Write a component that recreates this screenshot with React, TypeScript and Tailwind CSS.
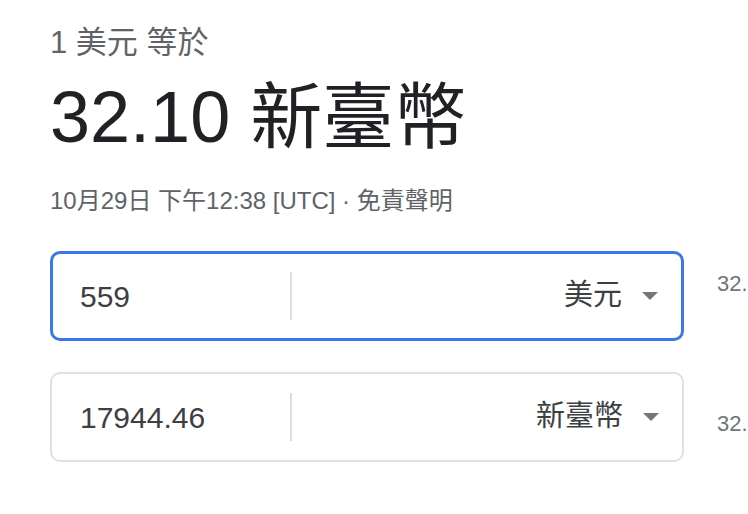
const font = { fontFamily: '"Liberation Sans", "Noto Sans CJK TC", Arial, sans-serif' };

function Arrow() {
    return (
        <svg width="16" height="8" viewBox="0 0 16 8" className="shrink-0">
            <path d="M0 0 L16 0 L8 8 Z" fill="#757575" />
        </svg>
    );
}

function ConverterRow({ value, unit, active }: { value: string; unit: string; active?: boolean }) {
    return (
        <div
            className={
                active
                    ? 'flex h-[90px] w-[634px] shrink-0 items-center rounded-[10px] border-[3px] border-[#3b78e7]'
                    : 'flex h-[90px] w-[634px] shrink-0 items-center rounded-[10px] border-2 border-[#dfe1e5]'
            }
        >
            <div className={active ? 'w-[237px] pl-[27px] text-[30px] text-[#3c4043]' : 'w-[238px] pl-[28px] text-[30px] text-[#3c4043]'}>
                {value}
            </div>
            <div className="h-[48px] w-[2px] bg-[#dadce0]" />
            <div className="flex flex-1 items-center justify-end gap-[20px] pr-[23px]">
                <span className="text-[29px] text-[#3c4043]">{unit}</span>
                <Arrow />
            </div>
        </div>
    );
}

export default function App() {
    return (
        <div className="h-[514px] w-[748px] overflow-hidden bg-white" style={font}>
            <div className="pl-[50px] pt-[23px]">
                <div className="text-[31px] leading-[40px] text-[#5f6368]">1 美元 等於</div>
                <div className="mt-[12px] text-[72px] leading-[84px] text-[#202124]">32.10 新臺幣</div>
                <div className="mt-[27px] text-[24px] leading-[30px] text-[#5f6368]">
                    10月29日 下午12:38 [UTC] · 免責聲明
                </div>

                <div className="mt-[35px] flex items-start">
                    <ConverterRow value="559" unit="美元" active />
                    <div className="ml-[33px] mt-[16px] whitespace-nowrap text-[22px] text-[#70757a]">32.10 新臺幣</div>
                </div>
                <div className="mt-[31px] flex items-start">
                    <ConverterRow value="17944.46" unit="新臺幣" />
                    <div className="ml-[33px] mt-[35px] whitespace-nowrap text-[22px] text-[#70757a]">32.10 新臺幣</div>
                </div>
            </div>
        </div>
    );
}
